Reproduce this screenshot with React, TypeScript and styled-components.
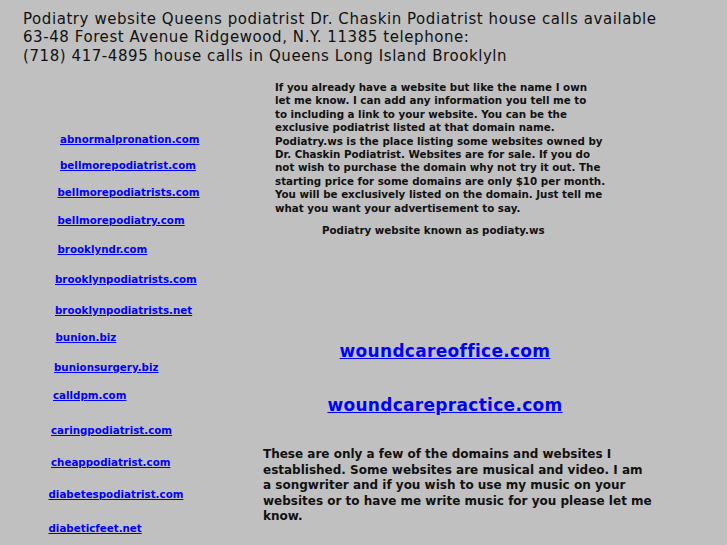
import styled, { createGlobalStyle } from "styled-components";

const GlobalStyle = createGlobalStyle`
  html, body {
    margin: 0;
    padding: 0;
    background: #c0c0c0;
  }
  body {
    font-family: "DejaVu Sans", Verdana, sans-serif;
    color: #000;
  }
`;

const Page = styled.div`
  width: 727px;
  min-height: 545px;
  background: #c0c0c0;
`;

const Header = styled.header`
  padding: 9.5px 0 0 23px;
  font-size: 15px;
  line-height: 18.7px;
  letter-spacing: 0.57px;
  font-weight: normal;
  color: #111;
`;

const HeaderLine = styled.div`
  white-space: nowrap;
`;

const Main = styled.div`
  display: flex;
  align-items: flex-start;
`;

const LinkColumn = styled.nav`
  width: 263px;
  flex: none;
  padding-top: 67px;
  display: flex;
  flex-direction: column;
  align-items: flex-start;
`;

const DomainLink = styled.a<{ $indent: number; $gap: number }>`
  display: block;
  margin-left: ${(p) => p.$indent}px;
  margin-top: ${(p) => p.$gap}px;
  font-size: 10.3px;
  line-height: 13px;
  font-weight: bold;
  color: #0000ff;
  text-decoration: underline;
  white-space: nowrap;
`;

const Content = styled.section`
  width: 364px;
  flex: none;
  padding-top: 15.1px;
  display: flex;
  flex-direction: column;
`;

const Intro = styled.p`
  margin: 0 0 0 12px;
  font-size: 10.3px;
  line-height: 13.45px;
  font-weight: bold;
  white-space: nowrap;
  color: #111;
`;

const Caption = styled.p`
  margin: 9px 0 0 59px;
  font-size: 10.3px;
  line-height: 13.45px;
  font-weight: bold;
  white-space: nowrap;
  color: #111;
`;

const BigLink = styled.a<{ $gap: number }>`
  display: block;
  margin-top: ${(p) => p.$gap}px;
  text-align: center;
  font-size: 17px;
  letter-spacing: 0.3px;
  font-weight: bold;
  color: #0000ff;
  text-decoration: underline;
  white-space: nowrap;
`;

const Closing = styled.p`
  margin: 32.1px 0 0 0;
  font-size: 12px;
  line-height: 15.5px;
  font-weight: bold;
  white-space: nowrap;
  color: #111;
`;

const domains: { name: string; indent: number; gap: number }[] = [
  { name: "abnormalpronation.com", indent: 60, gap: 0 },
  { name: "bellmorepodiatrist.com", indent: 60, gap: 13 },
  { name: "bellmorepodiatrists.com", indent: 57.5, gap: 14 },
  { name: "bellmorepodiatry.com", indent: 57.5, gap: 15 },
  { name: "brooklyndr.com", indent: 57.5, gap: 16 },
  { name: "brooklynpodiatrists.com", indent: 55, gap: 17 },
  { name: "brooklynpodiatrists.net", indent: 55, gap: 18 },
  { name: "bunion.biz", indent: 55.5, gap: 14 },
  { name: "bunionsurgery.biz", indent: 54, gap: 17 },
  { name: "calldpm.com", indent: 53, gap: 15 },
  { name: "caringpodiatrist.com", indent: 51, gap: 22 },
  { name: "cheappodiatrist.com", indent: 51, gap: 19 },
  { name: "diabetespodiatrist.com", indent: 48.5, gap: 19 },
  { name: "diabeticfeet.net", indent: 48.5, gap: 21 },
];

const introLines = [
  "If you already have a website but like the name I own",
  "let me know. I can add any information you tell me to",
  "to including a link to your website. You can be the",
  "exclusive podiatrist listed at that domain name.",
  "Podiatry.ws is the place listing some websites owned by",
  "Dr. Chaskin Podiatrist. Websites are for sale. If you do",
  "not wish to purchase the domain why not try it out. The",
  "starting price for some domains are only $10 per month.",
  "You will be exclusively listed on the domain. Just tell me",
  "what you want your advertisement to say.",
];

const closingLines = [
  "These are only a few of the domains and websites I",
  "established. Some websites are musical and video. I am",
  "a songwriter and if you wish to use my music on your",
  "websites or to have me write music for you please let me",
  "know.",
];

export default function App() {
  return (
    <>
      <GlobalStyle />
      <Page>
        <Header>
          <HeaderLine>
            Podiatry website Queens podiatrist Dr. Chaskin Podiatrist house calls available
          </HeaderLine>
          <HeaderLine>63-48 Forest Avenue Ridgewood, N.Y. 11385 telephone:</HeaderLine>
          <HeaderLine>(718) 417-4895 house calls in Queens Long Island Brooklyln</HeaderLine>
        </Header>
        <Main>
          <LinkColumn>
            {domains.map((d) => (
              <DomainLink key={d.name} href="#" $indent={d.indent} $gap={d.gap}>
                {d.name}
              </DomainLink>
            ))}
          </LinkColumn>
          <Content>
            <Intro>
              {introLines.map((l, i) => (
                <span key={i}>
                  {l}
                  <br />
                </span>
              ))}
            </Intro>
            <Caption>Podiatry website known as podiaty.ws</Caption>
            <BigLink href="#" $gap={103.2}>
              woundcareoffice.com
            </BigLink>
            <BigLink href="#" $gap={34.5}>
              woundcarepractice.com
            </BigLink>
            <Closing>
              {closingLines.map((l, i) => (
                <span key={i}>
                  {l}
                  <br />
                </span>
              ))}
            </Closing>
          </Content>
        </Main>
      </Page>
    </>
  );
}
